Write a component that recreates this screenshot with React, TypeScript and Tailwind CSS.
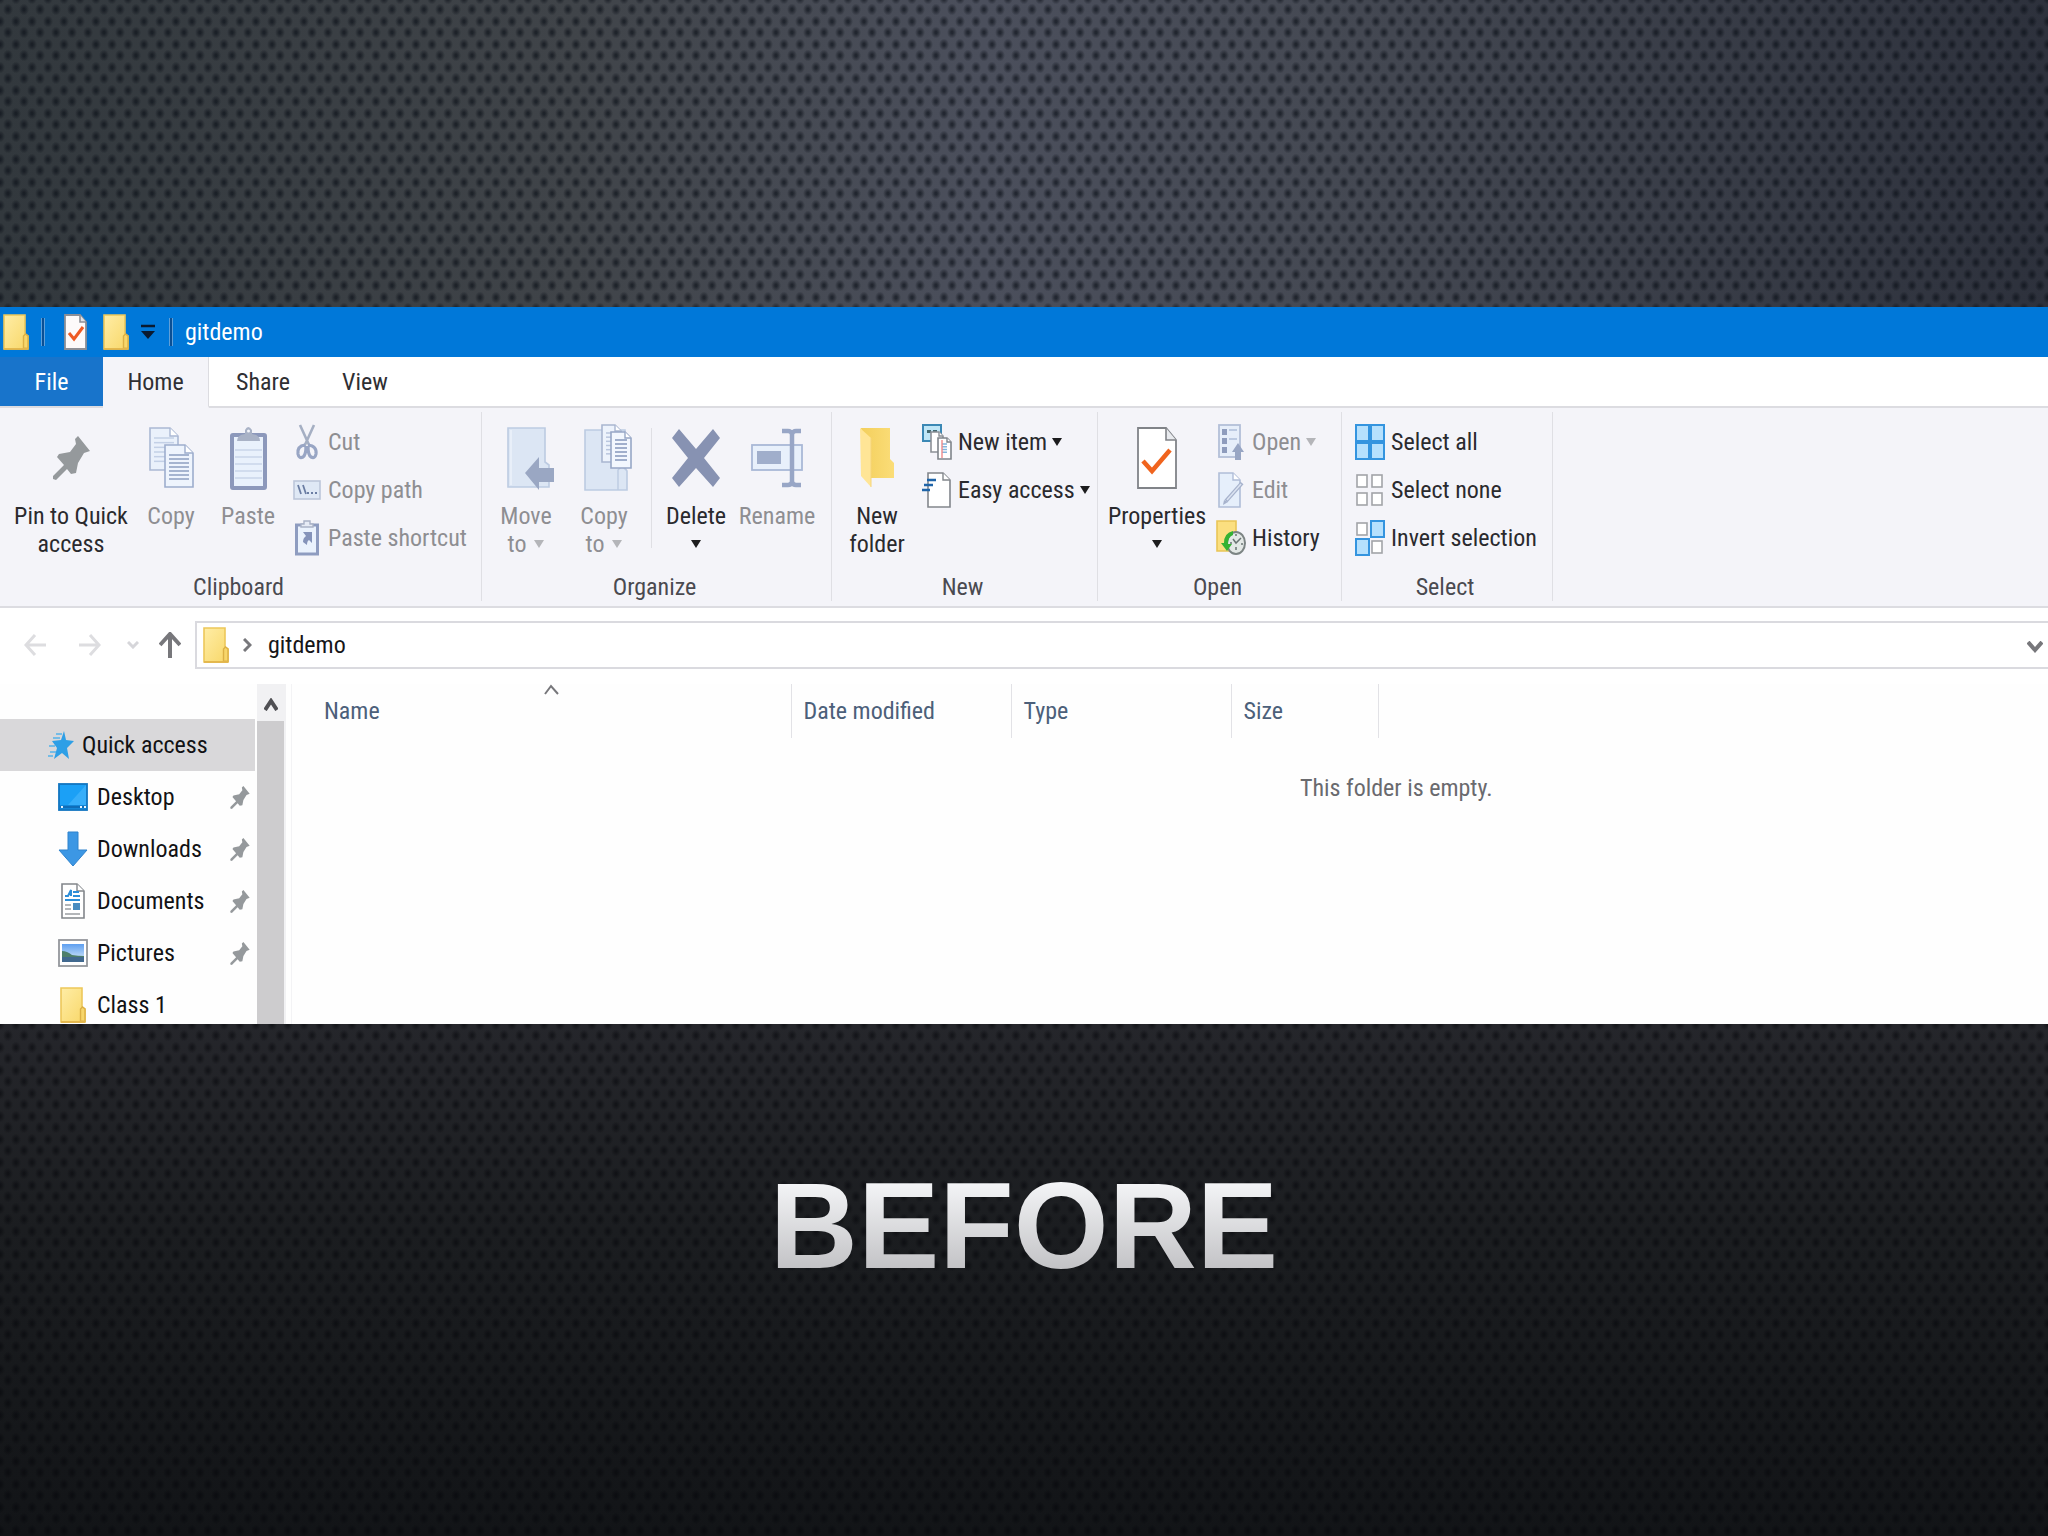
import React from 'react'

type IconProps = { className?: string }

type DocProps = {
  x: number
  y: number
  w: number
  h: number
  fold?: number
  stroke: string
  fill: string
  lines?: number
  lineColor?: string
}

// sheet of paper with a folded corner
function Doc({ x, y, w, h, fold = 8, stroke, fill, lines = 0, lineColor = stroke }: DocProps) {
  const step = (h - fold - 6) / Math.max(lines, 1)
  return (
    <g>
      <path d={`M${x} ${y}h${w - fold}l${fold} ${fold}v${h - fold}h${-w}z`} fill={fill} stroke={stroke} strokeWidth="1.6" />
      <path d={`M${x + w - fold} ${y}v${fold}h${fold}`} fill="#fff" stroke={stroke} strokeWidth="1.4" />
      {Array.from({ length: lines }, (_, i) => (
        <path key={i} d={`M${x + 4} ${y + fold + 2 + i * step}h${w - 8}`} stroke={lineColor} strokeWidth="1.5" />
      ))}
    </g>
  )
}

function FolderIcon({ className }: IconProps) {
  return (
    <svg width="26" height="36" viewBox="0 0 26 36" className={className} aria-hidden="true">
      <defs>
        <linearGradient id="folder" x1="0" y1="0" x2="1" y2="1">
          <stop offset="0" stopColor="#ffeda6" />
          <stop offset="1" stopColor="#f8d768" />
        </linearGradient>
      </defs>
      <path d="M1 1h21v19l3 2v13H1z" fill="url(#folder)" stroke="#edc75a" strokeWidth="1.6" />
      <path d="M20.500 34V22l2-2 2.500 2v12.500z" fill="#f7d66b" stroke="#dcb044" strokeWidth="1.4" />
      <path d="M1 35h24" stroke="#e2b64b" strokeWidth="1.8" />
    </svg>
  )
}

function PropsSmallIcon() {
  return (
    <svg width="23" height="36" viewBox="0 0 23 36" aria-hidden="true">
      <path d="M1 1h15l6 7v27H1z" fill="#fdfafa" stroke="#8d8f96" strokeWidth="1.8" />
      <path d="M16 1v7h6" fill="#e4e4e8" stroke="#8d8f96" strokeWidth="1.6" />
      <path d="M5 19l5 6 9-12" fill="none" stroke="#ee5a24" strokeWidth="3" />
    </svg>
  )
}

function PinIcon({ className }: IconProps) {
  return (
    <svg viewBox="0 0 37 44" className={className} aria-hidden="true">
      <path d="M25 0L37 15L31 17L25 27L23 37L18 38L14 33L3 44L0 43L0 40L11 29L4 21L6 18L17 16L23 8L22 3Z" fill="#95999c" />
    </svg>
  )
}

function CopyIcon() {
  return (
    <svg width="46" height="62" viewBox="0 0 46 62" aria-hidden="true">
      <Doc x={2} y={1} w={28} h={42} stroke="#aab8d4" fill="#eaf1fb" lines={6} lineColor="#c3d0e6" />
      <Doc x={17} y={18} w={28} h={42} stroke="#9dadcd" fill="#eef4fd" lines={7} lineColor="#8d9fc0" />
    </svg>
  )
}

function PasteIcon() {
  return (
    <svg width="40" height="64" viewBox="0 0 40 64" aria-hidden="true">
      <rect x="4" y="9" width="33" height="53" rx="1" fill="#e9f1fc" stroke="#8c98bb" strokeWidth="4" />
      <path d="M7 24h27M7 31h27M7 38h27M7 45h27M7 52h27" stroke="#c9d5e9" strokeWidth="1.4" />
      <path d="M9 15q0-6 8-7V4q3-6 7 0v4q8 1 8 7z" fill="#a9b2c6" />
      <circle cx="20.500" cy="5" r="1.500" fill="#f4f5fa" />
    </svg>
  )
}

function CutIcon() {
  return (
    <svg width="24" height="36" viewBox="0 0 24 36" aria-hidden="true">
      <path d="M5 1l10 22M19 1L9 23" stroke="#a5afc3" strokeWidth="2.600" />
      <path d="M10 21q-8 1-7 9 1 5 5 3 3-2 3-11M13 21q9 1 8 9-1 5-5 3-3-2-3-11" fill="none" stroke="#98a5c4" strokeWidth="3.200" />
    </svg>
  )
}

function CopyPathIcon() {
  return (
    <svg width="28" height="20" viewBox="0 0 28 20" aria-hidden="true">
      <rect x="1" y="1" width="26" height="18" fill="#dfe8f5" stroke="#bcc6da" strokeWidth="1.6" />
      <path d="M5 5l3 9M10 5l3 9" stroke="#6b7da3" strokeWidth="1.8" />
      <path d="M14 13h2M18 13h2M22 13h2" stroke="#6b7da3" strokeWidth="2" />
    </svg>
  )
}

function PasteShortcutIcon() {
  return (
    <svg width="24" height="36" viewBox="0 0 24 36" aria-hidden="true">
      <rect x="1.500" y="5" width="21" height="29" fill="#eaf2fd" stroke="#8e9cc0" strokeWidth="3" />
      <path d="M6 7V4h3V1h6v3h3v3z" fill="#e6ebf5" stroke="#a9b2c6" strokeWidth="1.4" />
      <path d="M8 12h9v11l-3-3q-2 1-2 5l-4-3q0-4 3-6z" fill="#8493ba" />
    </svg>
  )
}

function MoveToIcon() {
  return (
    <svg width="58" height="64" viewBox="-10 0 58 64" aria-hidden="true">
      <path d="M1 2h37v34l4 3v22H1z" fill="#dce6f4" stroke="#bccbe2" strokeWidth="1.6" />
      <path d="M4 4v55" stroke="#e8eff9" strokeWidth="2" />
      <path d="M47 42v14H32v8L18 47l14-16v11z" fill="#9aa7c3" />
    </svg>
  )
}

function CopyToIcon() {
  return (
    <svg width="56" height="70" viewBox="-8 0 56 70" aria-hidden="true">
      <path d="M1 7h40v38l2 3v19H1z" fill="#dce6f4" stroke="#bccbe2" strokeWidth="1.6" />
      <path d="M34 67V47l4-4 4 4" fill="none" stroke="#bccbe2" strokeWidth="1.4" />
      <Doc x={18} y={2} w={19} h={37} fold={6} stroke="#a9b6d0" fill="#edf3fc" lines={6} lineColor="#b9c6de" />
      <Doc x={27} y={9} w={20} h={36} fold={6} stroke="#97a7c6" fill="#f2f7fe" lines={6} lineColor="#8497bb" />
    </svg>
  )
}

function DeleteIcon() {
  return (
    <svg width="48" height="58" viewBox="0 0 48 58" aria-hidden="true">
      <path d="M7 0L24 20L41 0L48 9L32 29L48 49L41 58L24 39L7 58L0 49L16 29L0 9Z" fill="#8792b2" />
    </svg>
  )
}

function RenameIcon() {
  return (
    <svg width="52" height="60" viewBox="0 0 52 60" aria-hidden="true">
      <rect x="1" y="17" width="50" height="25" fill="#e8f0fb" stroke="#a9b8d6" strokeWidth="1.8" />
      <rect x="6" y="23" width="24" height="13" fill="#a0aecb" />
      <path d="M31 3h6q3 0 4 3 1-3 4-3h5M31 57h6q3 0 4-3 1 3 4 3h5M41 4v52" fill="none" stroke="#98a6c6" strokeWidth="4.500" />
    </svg>
  )
}

function NewFolderIcon() {
  return (
    <svg width="34" height="60" viewBox="0 0 34 60" aria-hidden="true">
      <defs>
        <linearGradient id="newFolder" x1="0" y1="0" x2="1" y2="0">
          <stop offset="0" stopColor="#f3cf5c" />
          <stop offset="1" stopColor="#fbdd78" />
        </linearGradient>
      </defs>
      <path d="M1 0h29v31l4 4v15H8z" fill="url(#newFolder)" />
      <path d="M0 0l11 10v49L1 48z" fill="#ffe596" />
      <path d="M11 10v49" stroke="#f5d47a" strokeWidth="1" />
    </svg>
  )
}

function NewItemIcon() {
  return (
    <svg width="30" height="36" viewBox="0 0 30 36" aria-hidden="true">
      <rect x="1" y="1" width="18" height="16" fill="#bfe6f7" stroke="#3b88b5" strokeWidth="2" />
      <path d="M5 6h4v3H5zM11 6h4v8h-4z" fill="#446a72" />
      <Doc x={9} y={8} w={12} h={20} fold={4} stroke="#8c9096" fill="#fff" />
      <Doc x={16} y={14} w={13} h={21} fold={4} stroke="#7f848a" fill="#fff" lines={4} lineColor="#84b6dd" />
      <path d="M20 16v18" stroke="#f08a8a" strokeWidth="1.4" />
    </svg>
  )
}

function EasyAccessIcon() {
  return (
    <svg width="30" height="36" viewBox="0 0 30 36" aria-hidden="true">
      <Doc x={6} y={1} w={22} h={34} fold={7} stroke="#82868c" fill="#fff" />
      <path d="M5 8h9M2 13h9M0 18h8" stroke="#1f64a8" strokeWidth="2.400" />
    </svg>
  )
}

function PropertiesIcon() {
  return (
    <svg width="40" height="62" viewBox="0 0 40 62" aria-hidden="true">
      <path d="M1 1h28l10 12v48H1z" fill="#fff" stroke="#808388" strokeWidth="1.8" />
      <path d="M29 1v12h10" fill="#e8eaee" stroke="#808388" strokeWidth="1.6" />
      <path d="M6 34l9 10 18-21" fill="none" stroke="#f0641e" strokeWidth="4.500" />
    </svg>
  )
}

function OpenIcon() {
  return (
    <svg width="26" height="36" viewBox="0 0 26 36" aria-hidden="true">
      <rect x="1" y="1" width="21" height="32" fill="#e6eefa" stroke="#b3bfd8" strokeWidth="1.8" />
      <path d="M4 5h5v6H4zM4 14h5v6H4zM4 23h5v6H4z" fill="#8e9cbd" />
      <path d="M11 6h8M11 15h8" stroke="#bccae2" strokeWidth="1.8" />
      <path d="M20 19l6 9h-3v8h-6v-8h-3z" fill="#98a6c4" />
    </svg>
  )
}

function EditIcon() {
  return (
    <svg width="26" height="36" viewBox="0 0 26 36" aria-hidden="true">
      <Doc x={1} y={1} w={21} h={34} fold={7} stroke="#b0bdd8" fill="#e6effb" />
      <path d="M8 29L24 11" stroke="#a6b2cc" strokeWidth="4" />
      <path d="M9 28L23 12" stroke="#dbe3f1" strokeWidth="1.500" />
      <path d="M5 33l1-5 4 2z" fill="#a6b2cc" />
    </svg>
  )
}

function HistoryIcon() {
  return (
    <svg width="30" height="36" viewBox="0 0 30 36" aria-hidden="true">
      <path d="M1 1h19v30H1z" fill="#fbdf80" stroke="#e9c557" strokeWidth="1.600" />
      <ellipse cx="20" cy="23" rx="9" ry="11" fill="#e3e8e6" stroke="#7c8484" strokeWidth="2" />
      <path d="M17 19l3 4 5-5M20 27v3M14 23h2M25 24h2M20 14v2" fill="none" stroke="#6a7474" strokeWidth="1.500" />
      <path d="M17 11q-9 2-9 12H5l6 8 5-7h-4q0-7 5-9z" fill="#34b233" />
    </svg>
  )
}

type CellProps = { x: number; y: number; on: boolean }

function Cell({ x, y, on }: CellProps) {
  return on ? (
    <rect x={x} y={y} width="13" height="16" fill="#b5e0fd" stroke="#3494df" strokeWidth="2" />
  ) : (
    <rect x={x + 1} y={y + 2} width="10" height="12" fill="#fff" stroke="#a2a4a8" strokeWidth="1.6" />
  )
}

function SelectIcon({ on }: { on: boolean[] }) {
  return (
    <svg width="30" height="36" viewBox="0 0 30 36" aria-hidden="true">
      {on.every(Boolean) && <rect x="0" y="0" width="30" height="36" fill="#3494df" />}
      <Cell x={1} y={1} on={on[0]} />
      <Cell x={16} y={1} on={on[1]} />
      <Cell x={1} y={19} on={on[2]} />
      <Cell x={16} y={19} on={on[3]} />
    </svg>
  )
}

function StarIcon() {
  return (
    <svg width="26" height="28" viewBox="0 0 26 28" aria-hidden="true">
      <path d="M16 0l2 9 8 1-7 7 2 11-7-6-8 6 3-11-5-7 9-1z" fill="#2e9fe6" />
      <path d="M8 3h6M5 7h7M2 21h6M0 25h5M1 15h6" stroke="#54b3ea" strokeWidth="1.600" />
    </svg>
  )
}

function DesktopIcon() {
  return (
    <svg width="30" height="28" viewBox="0 0 30 28" aria-hidden="true">
      <rect x="1" y="1" width="28" height="26" fill="#1ba0f6" stroke="#1275c0" strokeWidth="1.800" />
      <path d="M28 2v20H10z" fill="#37aefa" />
      <path d="M2 24h26" stroke="#0f6db8" strokeWidth="3" />
      <path d="M3 24h2M22 24h2M26 24h2" stroke="#e9f6ff" strokeWidth="2" />
    </svg>
  )
}

function DownloadsIcon() {
  return (
    <svg width="30" height="36" viewBox="0 0 30 36" aria-hidden="true">
      <path d="M10 1h10v18h9L15 35 1 19h9z" fill="#3c97e4" stroke="#2f83cd" strokeWidth="1" />
    </svg>
  )
}

function DocumentsIcon() {
  return (
    <svg width="24" height="36" viewBox="0 0 24 36" aria-hidden="true">
      <Doc x={1} y={1} w={22} h={34} fold={7} stroke="#82868b" fill="#fff" />
      <path d="M4 13h3l3-6v6M12 9h6M12 13h7M4 17h15" stroke="#2d8ed8" strokeWidth="2" fill="none" />
      <path d="M4 22h6M4 26h6M4 31h15" stroke="#9b9ea3" strokeWidth="1.600" />
      <rect x="12" y="20" width="7" height="7" fill="#4a8cc0" />
    </svg>
  )
}

function PicturesIcon() {
  return (
    <svg width="30" height="28" viewBox="0 0 30 28" aria-hidden="true">
      <defs>
        <linearGradient id="sky" x1="0" y1="0" x2="0" y2="1">
          <stop offset="0" stopColor="#5e9ff0" />
          <stop offset="1" stopColor="#e2f1fb" />
        </linearGradient>
      </defs>
      <rect x="1" y="1" width="28" height="26" fill="#fff" stroke="#94979c" strokeWidth="1.800" />
      <rect x="4" y="5" width="22" height="18" fill="url(#sky)" />
      <path d="M4 12q5 0 10 4 6 1 12 1v2H4z" fill="#4e7f6b" />
      <path d="M4 18h22v5H4z" fill="#41698f" />
    </svg>
  )
}

function Caret({ muted }: { muted?: boolean }) {
  return (
    <svg width="10" height="8" viewBox="0 0 10 8" className="inline-block shrink-0" aria-hidden="true">
      <path d="M0 0h10L5 8z" fill={muted ? '#b4b5b9' : '#1c1c1e'} />
    </svg>
  )
}

type BigButtonProps = {
  icon: React.ReactNode
  width: string
  disabled?: boolean
  children: React.ReactNode
}

function BigButton({ icon, width, disabled, children }: BigButtonProps) {
  return (
    <button
      disabled={disabled}
      className={`flex shrink-0 flex-col items-center pt-[14px] text-center leading-7 disabled:text-[#8e8e92] ${width}`}
    >
      <span className="flex h-16 items-center justify-center">{icon}</span>
      <span className="mt-3 flex flex-col items-center whitespace-nowrap">{children}</span>
    </button>
  )
}

type SmallButtonProps = {
  icon: React.ReactNode
  label: string
  disabled?: boolean
  menu?: boolean
}

function SmallButton({ icon, label, disabled, menu }: SmallButtonProps) {
  return (
    <button disabled={disabled} className="flex h-12 items-center gap-[5px] whitespace-nowrap disabled:text-[#8e8e92]">
      <span className="flex w-8 justify-center">{icon}</span>
      {label}
      {menu && <Caret muted={disabled} />}
    </button>
  )
}

type GroupProps = { title: string; className: string; children: React.ReactNode }

function Group({ title, className, children }: GroupProps) {
  return (
    <section aria-label={title} className={`flex shrink-0 flex-col justify-between border-r border-[#dfdfe4] ${className}`}>
      <div className="flex items-start">{children}</div>
      <div className="pr-1 text-center leading-7 text-[#4a4a50]">{title}</div>
    </section>
  )
}

function SmallColumn({ children }: { children: React.ReactNode }) {
  return <div className="flex flex-col items-start pt-[6px]">{children}</div>
}

function Divider() {
  return <span className="h-7 w-1 border-x border-[#5f9fd8] bg-[#0a4f94]" />
}

function TitleBar() {
  return (
    <header className="flex h-[50px] items-center bg-[#0078d9] pl-[3px] text-white">
      <FolderIcon />
      <span className="ml-3 flex"><Divider /></span>
      <button aria-label="Properties" className="ml-[19px]"><PropsSmallIcon /></button>
      <button aria-label="New folder" className="ml-4"><FolderIcon /></button>
      <button aria-label="Customize toolbar" className="ml-3">
        <svg width="14" height="16" viewBox="0 0 14 16" aria-hidden="true">
          <path d="M0 2h14" stroke="#0a1a30" strokeWidth="2.500" />
          <path d="M0 7h14l-7 8z" fill="#0a1a30" />
        </svg>
      </button>
      <span className="ml-[14px] flex"><Divider /></span>
      <h1 className="ml-3">gitdemo</h1>
    </header>
  )
}

function Tabs() {
  return (
    <nav className="flex h-[51px] bg-white text-[#2f2f33]">
      <button className="w-[103px] border-b-2 border-[#dcdce1] bg-[#1874cb] text-white">File</button>
      <button className="w-[106px] border-r border-b-2 border-r-[#dcdce1] border-b-[#f4f4f9] bg-[#f4f4f9]">Home</button>
      <div className="flex flex-1 border-b-2 border-[#dcdce1]">
        <button className="w-[108px]">Share</button>
        <button className="w-[96px]">View</button>
      </div>
    </nav>
  )
}

function Ribbon() {
  return (
    <div className="flex h-[200px] border-b-2 border-[#dcdce1] bg-[#f4f4f9] pt-1 pb-[5px] text-[#2a2a2e]">
      <Group title="Clipboard" className="w-[482px]">
        <div className="flex pl-[14px] pr-[5px]">
          <BigButton icon={<PinIcon className="h-11 w-[37px]" />} width="w-[114px]">
            <span>Pin to Quick</span>
            <span>access</span>
          </BigButton>
          <BigButton icon={<CopyIcon />} width="ml-1 w-[78px]" disabled>Copy</BigButton>
          <BigButton icon={<PasteIcon />} width="w-[76px]" disabled>Paste</BigButton>
        </div>
        <SmallColumn>
          <SmallButton icon={<CutIcon />} label="Cut" disabled />
          <SmallButton icon={<CopyPathIcon />} label="Copy path" disabled />
          <SmallButton icon={<PasteShortcutIcon />} label="Paste shortcut" disabled />
        </SmallColumn>
      </Group>

      <Group title="Organize" className="w-[350px]">
        <div className="flex pl-[5px]">
          <BigButton icon={<MoveToIcon />} width="w-[78px]" disabled>
            <span>Move</span>
            <span className="flex items-center gap-2">to <Caret muted /></span>
          </BigButton>
          <BigButton icon={<CopyToIcon />} width="w-[78px]" disabled>
            <span>Copy</span>
            <span className="flex items-center gap-2">to <Caret muted /></span>
          </BigButton>
        </div>
        <span className="mx-2 mt-4 h-[120px] w-px bg-[#dfdfe4]" />
        <BigButton icon={<DeleteIcon />} width="w-[72px]">
          <span>Delete</span>
          <span className="flex h-7 items-center"><Caret /></span>
        </BigButton>
        <BigButton icon={<RenameIcon />} width="w-[90px]" disabled>Rename</BigButton>
      </Group>

      <Group title="New" className="w-[266px]">
        <div className="flex pl-[6px] pr-[5px]">
          <BigButton icon={<NewFolderIcon />} width="w-[78px]">
            <span>New</span>
            <span>folder</span>
          </BigButton>
        </div>
        <SmallColumn>
          <SmallButton icon={<NewItemIcon />} label="New item" menu />
          <SmallButton icon={<EasyAccessIcon />} label="Easy access" menu />
        </SmallColumn>
      </Group>

      <Group title="Open" className="w-[244px]">
        <div className="flex pl-[6px] pr-[5px]">
          <BigButton icon={<PropertiesIcon />} width="w-[106px]">
            <span>Properties</span>
            <span className="flex h-7 items-center"><Caret /></span>
          </BigButton>
        </div>
        <SmallColumn>
          <SmallButton icon={<OpenIcon />} label="Open" disabled menu />
          <SmallButton icon={<EditIcon />} label="Edit" disabled />
          <SmallButton icon={<HistoryIcon />} label="History" />
        </SmallColumn>
      </Group>

      <Group title="Select" className="w-[211px]">
        <div className="pl-3">
          <SmallColumn>
            <SmallButton icon={<SelectIcon on={[true, true, true, true]} />} label="Select all" />
            <SmallButton icon={<SelectIcon on={[false, false, false, false]} />} label="Select none" />
            <SmallButton icon={<SelectIcon on={[false, true, true, false]} />} label="Invert selection" />
          </SmallColumn>
        </div>
      </Group>
    </div>
  )
}

type ArrowProps = { d: string; color: string; w: number; h: number; stroke?: number }

function Arrow({ d, color, w, h, stroke = 3 }: ArrowProps) {
  return (
    <svg width={w} height={h} viewBox={`0 0 ${w} ${h}`} aria-hidden="true">
      <path d={d} fill="none" stroke={color} strokeWidth={stroke} />
    </svg>
  )
}

function AddressBar() {
  return (
    <div className="flex h-[76px] items-start bg-white pt-[13px] pl-2">
      <button aria-label="Back" className="flex h-12 w-[54px] items-center justify-center">
        <Arrow w={22} h={22} d="M22 11H2M11 1L2 11L11 21" color="#dddde0" />
      </button>
      <button aria-label="Forward" className="flex h-12 w-14 items-center justify-center">
        <Arrow w={22} h={22} d="M0 11H20M11 1L20 11L11 21" color="#dddde0" />
      </button>
      <button aria-label="Recent locations" className="flex h-12 w-[30px] items-center justify-center">
        <Arrow w={12} h={8} d="M1 1L6 6L11 1" color="#d6d6da" />
      </button>
      <button aria-label="Up" className="flex h-12 w-11 items-center justify-center">
        <Arrow w={22} h={26} d="M11 26V2M1 13L11 2L21 13" color="#77777b" stroke={4} />
      </button>
      <div className="ml-[3px] flex h-12 flex-1 items-center border-y-2 border-l-2 border-[#dadadf] bg-white pl-[6px] text-[#161618]">
        <FolderIcon />
        <span className="ml-[14px] flex">
          <Arrow w={9} h={14} d="M1 1L7 7L1 13" color="#77777b" />
        </span>
        <span className="ml-4 flex-1">gitdemo</span>
        <button aria-label="Previous locations" className="mr-[5px] mt-1">
          <Arrow w={16} h={12} d="M1 1L8 9L15 1" color="#77777b" stroke={4} />
        </button>
      </div>
    </div>
  )
}

const places = [
  { name: 'Desktop', icon: <DesktopIcon />, pinned: true },
  { name: 'Downloads', icon: <DownloadsIcon />, pinned: true },
  { name: 'Documents', icon: <DocumentsIcon />, pinned: true },
  { name: 'Pictures', icon: <PicturesIcon />, pinned: true },
  { name: 'Class 1', icon: <FolderIcon />, pinned: false },
]

function Sidebar() {
  return (
    <aside className="flex shrink-0 border-r border-[#f3f3f5] pr-[5px]">
      <ul className="w-[255px] pt-[35px] text-[#121214]">
        <li>
          <a href="#quick-access" className="flex h-[52px] items-center gap-2 bg-[#d9d8da] pl-12">
            <StarIcon />
            Quick access
          </a>
        </li>
        {places.map((place) => (
          <li key={place.name}>
            <a href="#place" className="flex h-[52px] items-center gap-[9px] pr-[5px] pl-[58px]">
              <span className="flex w-[30px] justify-center">{place.icon}</span>
              <span className="flex-1">{place.name}</span>
              {place.pinned && <PinIcon className="h-[23px] w-5" />}
            </a>
          </li>
        ))}
      </ul>
      <div className="ml-[2px] flex w-[29px] flex-col bg-[#f1f1f3]">
        <button aria-label="Scroll up" className="flex h-[37px] w-[27px] shrink-0 items-center justify-center pt-1">
          <Arrow w={14} h={13} d="M1 12L7 3L13 12" color="#505054" stroke={4} />
        </button>
        <div className="w-[27px] flex-1 bg-[#cdccce]" />
      </div>
    </aside>
  )
}

function FileList() {
  return (
    <main className="flex-1 pl-5">
      <table className="w-full table-fixed border-collapse text-left">
        <thead>
          <tr className="h-[54px] text-[#4c607a]">
            <th className="relative w-[479px] border-r border-[#e2e2e6] pl-3 font-normal">
              Name
              <span className="absolute inset-x-0 top-0 flex justify-center">
                <Arrow w={15} h={11} d="M1 10L7 2L14 10" color="#77777b" stroke={2} />
              </span>
            </th>
            <th className="w-[220px] border-r border-[#e2e2e6] pl-3 font-normal">Date modified</th>
            <th className="w-[220px] border-r border-[#e2e2e6] pl-3 font-normal">Type</th>
            <th className="w-[147px] border-r border-[#e2e2e6] pl-3 font-normal">Size</th>
            <th />
          </tr>
        </thead>
        <tbody>
          <tr>
            <td colSpan={5} className="pt-9 pl-[988px] text-[#6a6a6e]">This folder is empty.</td>
          </tr>
        </tbody>
      </table>
    </main>
  )
}

export default function App() {
  return (
    <div className="grid min-h-screen grid-cols-1 grid-rows-[3fr_auto_5fr] overflow-hidden font-['Roboto_Condensed',Roboto,sans-serif] text-2xl leading-7">
      <div className="bg-[radial-gradient(ellipse_5px_6px,#0b1018a0_20%,transparent),radial-gradient(ellipse_5px_6px,#0b1018a0_20%,transparent),linear-gradient(to_right,#32383d,#404449_28%,#4b4f5c_48%,#454953_65%,#2d313c)] bg-[length:16px_23px,16px_23px,100%_100%] bg-[position:0px_-2px,8px_10px,0px_0px]" />
      <div>
        <TitleBar />
        <Tabs />
        <Ribbon />
        <AddressBar />
        <div className="flex h-[340px] overflow-hidden bg-[#fefefe]">
          <Sidebar />
          <FileList />
        </div>
      </div>
      <div className="bg-[radial-gradient(ellipse_5px_6px,#05060a80_20%,transparent),radial-gradient(ellipse_5px_6px,#05060a80_20%,transparent),linear-gradient(to_bottom,#25262b,#1b1d20_40%,#121417)] bg-[length:16px_23px,16px_23px,100%_100%] bg-[position:0px_0px,8px_12px,0px_0px] pt-[141px] text-center">
        <h2 className="bg-[linear-gradient(to_bottom,#f4f5f7_14%,#c2c2c5_86%)] bg-clip-text font-['Liberation_Sans',Arial,sans-serif] text-[122px] leading-none font-bold text-transparent">
          BEFORE
        </h2>
      </div>
    </div>
  )
}
